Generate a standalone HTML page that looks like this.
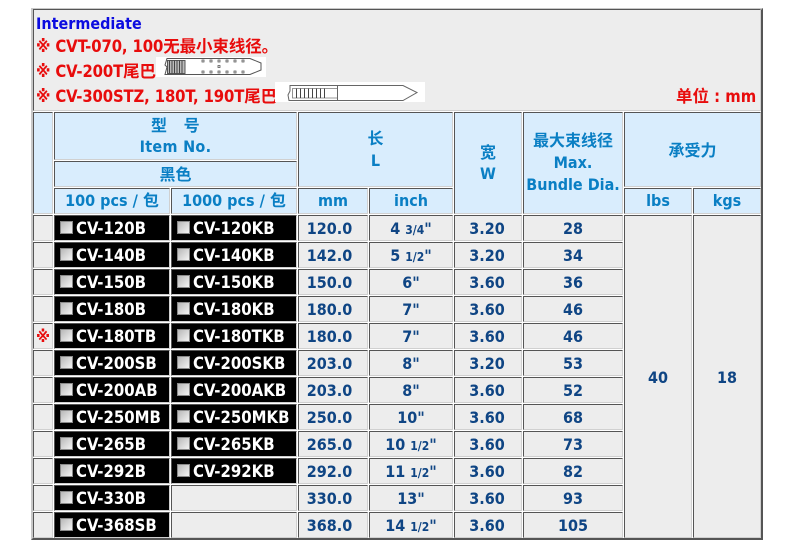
<!DOCTYPE html>
<html><head><meta charset="utf-8"><style>
html,body{margin:0;padding:0;background:#fff;width:800px;height:556px;overflow:hidden}
body{position:relative;font-family:"DejaVu Sans Condensed","DejaVu Sans","Noto Sans CJK SC",sans-serif;font-stretch:condensed;font-weight:bold;font-size:16px}
#o{position:absolute;left:31px;top:8px;width:732px;height:532px;box-sizing:border-box;border:2px solid;border-color:#c8c8c8 #555 #555 #c8c8c8;background:#fff}
.c{position:absolute;box-sizing:border-box;border:1px solid;border-color:#555 #d0d0d0 #d0d0d0 #555;background:#ededed;text-align:center;color:#0f4584;line-height:24px;white-space:nowrap;overflow:hidden}
.h{background:#d9edfd;color:#0a7fc4}
.r .c{line-height:25px}
.r .k{background:#000;color:#fff;text-align:left;padding-left:21px;font-size:16.6px}
.k i{position:absolute;left:5px;top:5px;width:13px;height:13px;box-sizing:border-box;border:1px solid #8a8a8a;background:linear-gradient(135deg,#b8b8b8,#f4f4f4)}
.r{position:absolute;left:0;top:0}
.c0{left:33px;width:20px;height:26px}.c1{left:54px;width:116px;height:26px}.c2{left:171px;width:126px;height:26px}
.r .c3{left:298px;width:70px;height:26px;padding-right:7px}.c4{left:369px;width:84px;height:26px}.r .c5{left:454px;width:68px;height:26px;padding-right:2px}.c6{left:523px;width:100px;height:26px}
small{font-size:12px}
.t{position:absolute;white-space:nowrap;line-height:24px;color:#e80c0c;font-size:16.5px}
</style></head><body>
<div id="o"></div>
<div class="c" style="left:33px;top:9px;width:728px;height:102px"></div>
<div class="t" style="left:36px;top:12px;color:#0c0ce0;font-size:16px">Intermediate</div>
<div class="t" style="left:36px;top:35px;letter-spacing:-.1px">※ CVT-070, 100无最小束线径。</div>
<div class="t" style="left:36px;top:60px;letter-spacing:-.1px">※ CV-200T尾巴</div>
<div class="t" style="left:36px;top:85px;letter-spacing:-.12px">※ CV-300STZ, 180T, 190T尾巴</div>
<div class="t" style="left:676px;top:85px">单位 : mm</div>
<svg style="position:absolute;left:156px;top:57px" width="110" height="20" viewBox="0 0 110 20"><rect width="110" height="20" fill="#fff"/><path d="M11 1.5H94L105 6V13L94 17.5H9L11 10L9 8Z" fill="#fff" stroke="#555"/><path d="M11.5 3.5h17.5v13h-17.5z" fill="#bbb" stroke="#555"/><path d="M13.5 3.5v13M16 3.5v13M18.500 3.500v13M21 3.500v13M23.500 3.500v13M26 3.500v13" stroke="#444"/><g fill="#fff" stroke="#555" stroke-width=".8"><path d="M46 3h2v2h-2zM54 3h2v2h-2zM62 3h2v2h-2zM70 3h2v2h-2zM78 3h2v2h-2zM86 3h2v2h-2zM46 14h2v2h-2zM54 14h2v2h-2zM62 14h2v2h-2zM70 14h2v2h-2zM78 14h2v2h-2zM86 14h2v2h-2zM62 8.500h2v2h-2z"/></g></svg>
<svg style="position:absolute;left:275px;top:82px" width="150" height="20" viewBox="0 0 150 20"><rect width="150" height="20" fill="#fff"/><path d="M15 3.500H128L142 10.500L128 18.500H14L13 13L15 9Z" fill="#fff" stroke="#666"/><path d="M17.500 6.500h45v9.500h-45z" fill="#fff" stroke="#777" stroke-width=".8"/><path d="M21.500 6.500v9.500M25.500 6.500v9.500M29.500 6.500v9.500M33.500 6.500v9.500M37.500 6.500v9.500M41.500 6.500v9.500M45.500 6.500v9.500M49.500 6.500v9.500" stroke="#444"/><path d="M62.500 3.500v15" stroke="#666"/></svg>

<div class="c h" style="left:33px;top:112px;width:20px;height:102px"></div>
<div class="c h" style="left:54px;top:112px;width:243px;height:48px;padding-top:2px;line-height:21px;letter-spacing:.3px">型　号<br>Item No.</div>
<div class="c h" style="left:54px;top:161px;width:243px;height:26px;line-height:25px">黑色</div>
<div class="c h" style="left:54px;top:188px;width:116px;height:26px">100 pcs / 包</div>
<div class="c h" style="left:171px;top:188px;width:126px;height:26px">1000 pcs / 包</div>
<div class="c h" style="left:298px;top:112px;width:155px;height:75px;padding-top:15px;line-height:22px">长<br>L</div>
<div class="c h" style="left:298px;top:188px;width:70px;height:26px">mm</div>
<div class="c h" style="left:369px;top:188px;width:84px;height:26px">inch</div>
<div class="c h" style="left:454px;top:112px;width:68px;height:102px;padding-top:29px;line-height:21px">宽<br>W</div>
<div class="c h" style="left:523px;top:112px;width:100px;height:102px;padding-top:17px;line-height:22px">最大束线径<br>Max.<br>Bundle Dia.</div>
<div class="c h" style="left:624px;top:112px;width:137px;height:75px;line-height:76px">承受力</div>
<div class="c h" style="left:624px;top:188px;width:68px;height:26px">lbs</div>
<div class="c h" style="left:693px;top:188px;width:68px;height:26px">kgs</div>
<div class="c" style="left:624px;top:215px;width:68px;height:323px;line-height:323px">40</div>
<div class="c" style="left:693px;top:215px;width:68px;height:323px;line-height:323px">18</div>

<div class="r" style="top:215px"><div class="c c0"></div><div class="c k c1"><i></i>CV-120B</div><div class="c k c2"><i></i>CV-120KB</div><div class="c c3">120.0</div><div class="c c4">4 <small>3/4</small>"</div><div class="c c5">3.20</div><div class="c c6">28</div></div>
<div class="r" style="top:242px"><div class="c c0"></div><div class="c k c1"><i></i>CV-140B</div><div class="c k c2"><i></i>CV-140KB</div><div class="c c3">142.0</div><div class="c c4">5 <small>1/2</small>"</div><div class="c c5">3.20</div><div class="c c6">34</div></div>
<div class="r" style="top:269px"><div class="c c0"></div><div class="c k c1"><i></i>CV-150B</div><div class="c k c2"><i></i>CV-150KB</div><div class="c c3">150.0</div><div class="c c4">6"</div><div class="c c5">3.60</div><div class="c c6">36</div></div>
<div class="r" style="top:296px"><div class="c c0"></div><div class="c k c1"><i></i>CV-180B</div><div class="c k c2"><i></i>CV-180KB</div><div class="c c3">180.0</div><div class="c c4">7"</div><div class="c c5">3.60</div><div class="c c6">46</div></div>
<div class="r" style="top:323px"><div class="c c0" style="color:#e80c0c">※</div><div class="c k c1"><i></i>CV-180TB</div><div class="c k c2"><i></i>CV-180TKB</div><div class="c c3">180.0</div><div class="c c4">7"</div><div class="c c5">3.60</div><div class="c c6">46</div></div>
<div class="r" style="top:350px"><div class="c c0"></div><div class="c k c1"><i></i>CV-200SB</div><div class="c k c2"><i></i>CV-200SKB</div><div class="c c3">203.0</div><div class="c c4">8"</div><div class="c c5">3.20</div><div class="c c6">53</div></div>
<div class="r" style="top:377px"><div class="c c0"></div><div class="c k c1"><i></i>CV-200AB</div><div class="c k c2"><i></i>CV-200AKB</div><div class="c c3">203.0</div><div class="c c4">8"</div><div class="c c5">3.60</div><div class="c c6">52</div></div>
<div class="r" style="top:404px"><div class="c c0"></div><div class="c k c1"><i></i>CV-250MB</div><div class="c k c2"><i></i>CV-250MKB</div><div class="c c3">250.0</div><div class="c c4">10"</div><div class="c c5">3.60</div><div class="c c6">68</div></div>
<div class="r" style="top:431px"><div class="c c0"></div><div class="c k c1"><i></i>CV-265B</div><div class="c k c2"><i></i>CV-265KB</div><div class="c c3">265.0</div><div class="c c4">10 <small>1/2</small>"</div><div class="c c5">3.60</div><div class="c c6">73</div></div>
<div class="r" style="top:458px"><div class="c c0"></div><div class="c k c1"><i></i>CV-292B</div><div class="c k c2"><i></i>CV-292KB</div><div class="c c3">292.0</div><div class="c c4">11 <small>1/2</small>"</div><div class="c c5">3.60</div><div class="c c6">82</div></div>
<div class="r" style="top:485px"><div class="c c0"></div><div class="c k c1"><i></i>CV-330B</div><div class="c c2"></div><div class="c c3">330.0</div><div class="c c4">13"</div><div class="c c5">3.60</div><div class="c c6">93</div></div>
<div class="r" style="top:512px"><div class="c c0"></div><div class="c k c1"><i></i>CV-368SB</div><div class="c c2"></div><div class="c c3">368.0</div><div class="c c4">14 <small>1/2</small>"</div><div class="c c5">3.60</div><div class="c c6">105</div></div>
</body></html>
